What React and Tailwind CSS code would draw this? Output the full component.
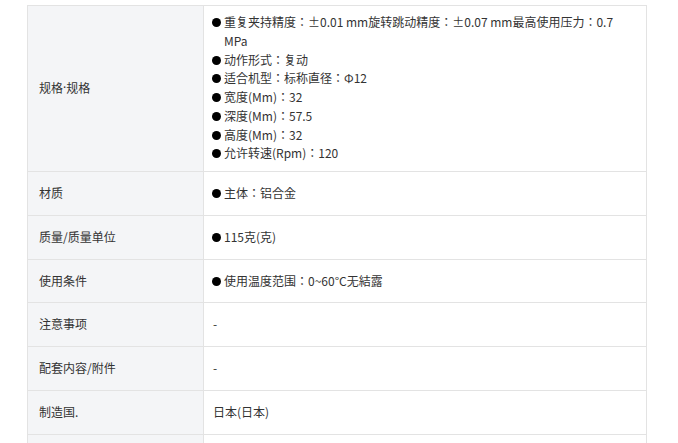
import React from "react";

const rows = [
  {
    label: (
      <>
        规格<span className="font-['Noto_Sans']">·</span>规格
      </>
    ),
    items: [
      "重复夹持精度：±0.01 mm旋转跳动精度：±0.07 mm最高使用压力：0.7 MPa",
      "动作形式：复动",
      "适合机型：标称直径：Φ12",
      "宽度(Mm)：32",
      "深度(Mm)：57.5",
      "高度(Mm)：32",
      "允许转速(Rpm)：120",
    ],
  },
  { label: "材质", items: ["主体：铝合金"] },
  { label: "质量/质量单位", items: ["115克(克)"] },
  { label: "使用条件", items: ["使用温度范围：0~60°C无結露"] },
  { label: "注意事项", text: "-" },
  { label: "配套内容/附件", text: "-" },
  { label: "制造国.", text: "日本(日本)" },
  { label: "", text: "" },
];

function Bullet({ children }) {
  return (
    <div className="flex items-start">
      <span className="mt-[5px] mr-[3px] h-[9px] w-[9px] shrink-0 rounded-full bg-black" />
      <span>{children}</span>
    </div>
  );
}

export default function App() {
  return (
    <div
      className="min-h-screen bg-white pt-[5px] pl-[27px] text-[12px] leading-[18.75px] text-[#333]"
      style={{ fontFamily: '"Noto Sans CJK JP", "Noto Sans CJK SC", sans-serif' }}
    >
      <div className="w-[620px] border-l border-r border-[#e3e3e3]">
        {rows.map((row, i) => (
          <div key={i} className="flex border-t border-[#e3e3e3]">
            <div className="flex w-[176px] shrink-0 items-center border-r border-[#e3e3e3] bg-[#f4f5f7] pl-[11px]">
              {row.label}
            </div>
            <div className={`flex-1 pl-2 pr-[26px] ${i === 0 ? "pt-[7px] pb-2" : "py-3"}`}>
              {row.items
                ? row.items.map((t, j) => <Bullet key={j}>{t}</Bullet>)
                : <div className="min-h-[18.75px] pl-px">{row.text}</div>}
            </div>
          </div>
        ))}
      </div>
    </div>
  );
}
